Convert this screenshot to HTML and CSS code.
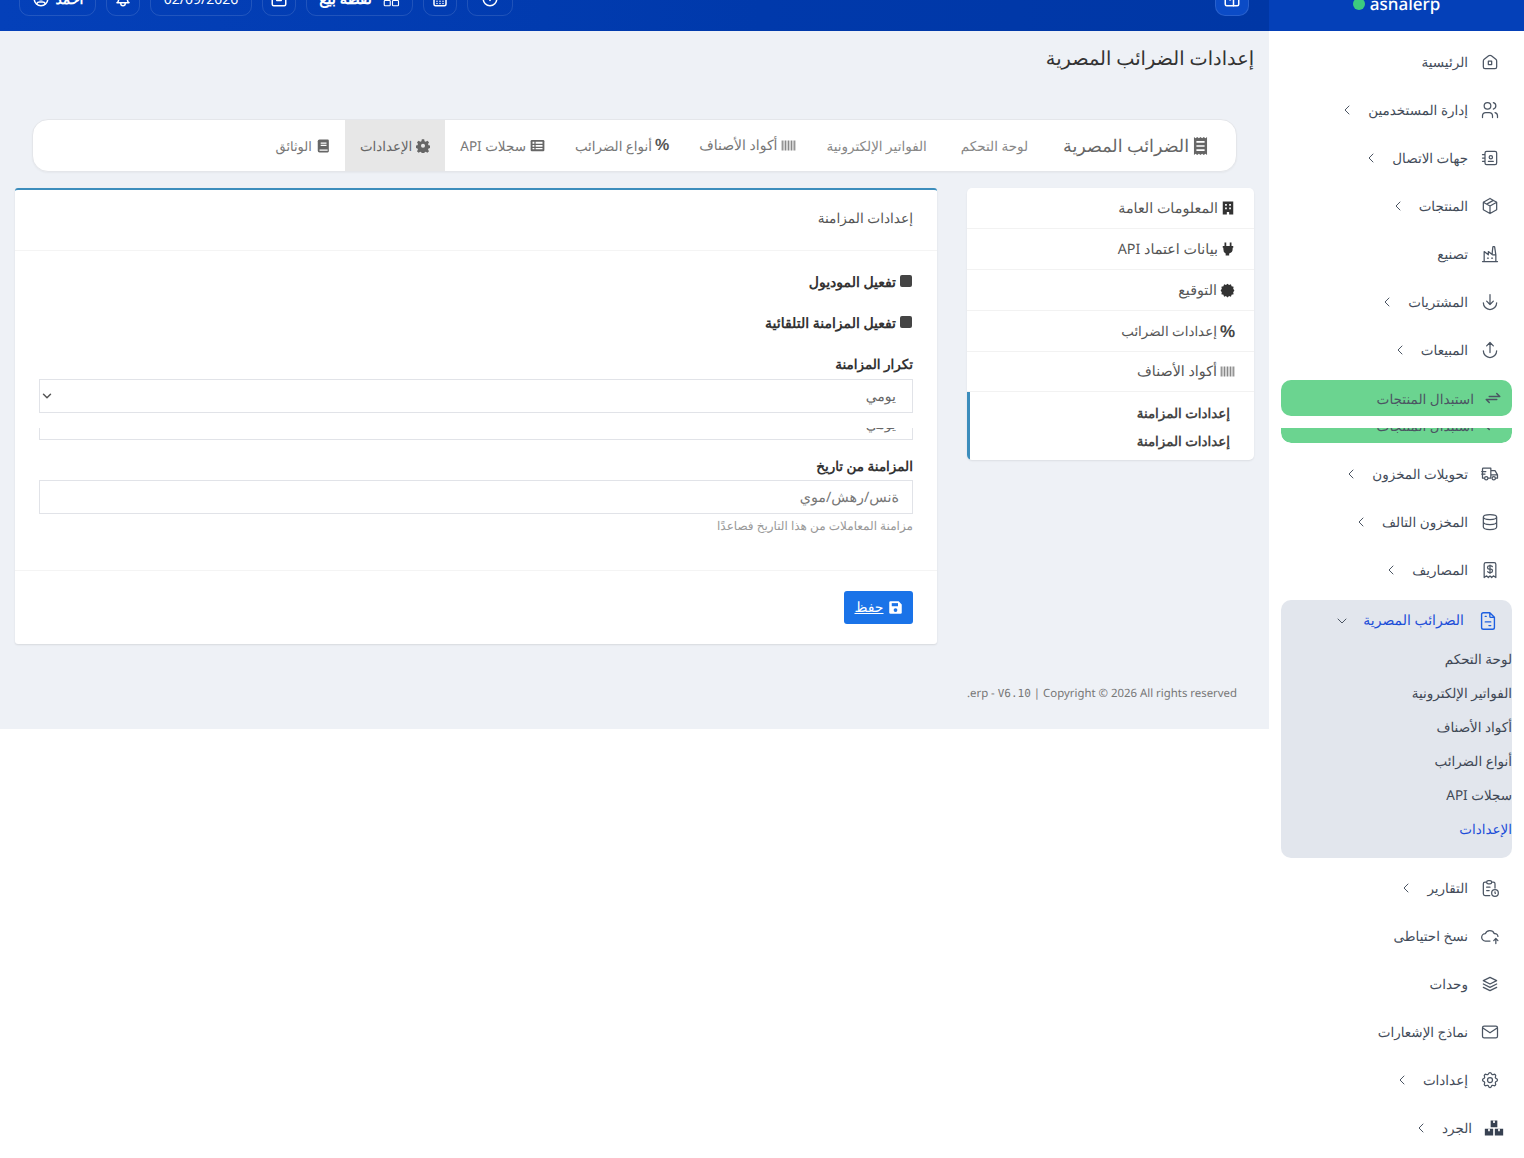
FILE: index.html
```html
<!DOCTYPE html>
<html lang="ar" dir="rtl">
<head>
<meta charset="utf-8">
<title>إعدادات الضرائب المصرية</title>
<link rel="stylesheet" href="styles.css">
</head>
<body>
<svg class="sprite" xmlns="http://www.w3.org/2000/svg">
<defs>
<symbol id="i-home" viewBox="0 0 24 24"><path d="M19 8.71l-5.333-4.148a2.666 2.666 0 0 0-3.274 0L5.059 8.71A2.665 2.665 0 0 0 4 10.815v7.2a2 2 0 0 0 2 2h12a2 2 0 0 0 2-2v-7.2c0-.823-.38-1.6-1-2.105"/><rect x="10" y="11" width="4" height="4"/></symbol>
<symbol id="i-users" viewBox="0 0 24 24"><path d="M5 7a4 4 0 1 0 8 0a4 4 0 1 0-8 0M3 21v-2a4 4 0 0 1 4-4h4a4 4 0 0 1 4 4v2M16 3.13a4 4 0 0 1 0 7.75M21 21v-2a4 4 0 0 0-3-3.85"/></symbol>
<symbol id="i-book" viewBox="0 0 24 24"><path d="M20 6v12a2 2 0 0 1-2 2H8a2 2 0 0 1-2-2V6a2 2 0 0 1 2-2h10a2 2 0 0 1 2 2zM10 16h6M11 11a2 2 0 1 0 4 0a2 2 0 1 0-4 0M3 8h3M3 12h3M3 16h3"/></symbol>
<symbol id="i-box" viewBox="0 0 24 24"><path d="M12 3l8 4.500v9L12 21l-8-4.500v-9L12 3M12 12l8-4.500M12 12v9M12 12L4 7.500M16 5.250l-8 4.500"/></symbol>
<symbol id="i-factory" viewBox="0 0 24 24"><path d="M3 21h18M5 21V9l5 4V9l5 4h4M19 21v-8l-1.436-9.574a.5.5 0 0 0-.495-.426h-1.145a.5.5 0 0 0-.494.418L14.500 12M9 17h1M14 17h1"/></symbol>
<symbol id="i-down" viewBox="0 0 24 24"><path d="M12 3v12M8 11l4 4l4-4M4 13a8 8 0 0 0 16 0"/></symbol>
<symbol id="i-up" viewBox="0 0 24 24"><path d="M12 15V3M8 7l4-4l4 4M4 13a8 8 0 0 0 16 0"/></symbol>
<symbol id="i-swap" viewBox="0 0 24 24"><path stroke-width="2" d="M7 10h14l-4-4M17 14H3l4 4"/></symbol>
<symbol id="i-truck" viewBox="0 0 24 24"><path d="M5 17H3V6a1 1 0 0 1 1-1h9v12H10M13 8h5l3 5v4h-2M13 13h8M2 9h5M2 12h4"/><circle cx="7.500" cy="17" r="2"/><circle cx="16.500" cy="17" r="2"/></symbol>
<symbol id="i-db" viewBox="0 0 24 24"><path d="M4 6a8 3 0 1 0 16 0a8 3 0 1 0-16 0M4 6v6a8 3 0 0 0 16 0V6M4 12v6a8 3 0 0 0 16 0v-6"/></symbol>
<symbol id="i-receipt" viewBox="0 0 24 24"><path d="M5 21V5a2 2 0 0 1 2-2h10a2 2 0 0 1 2 2v16l-3-2l-2 2l-2-2l-2 2l-2-2l-3 2M14.800 8a2 2 0 0 0-1.800-1h-2a2 2 0 0 0 0 4h2a2 2 0 0 1 0 4h-2a2 2 0 0 1-1.800-1M12 6v10"/></symbol>
<symbol id="i-invoice" viewBox="0 0 24 24"><path d="M14 3v4a1 1 0 0 0 1 1h4M17 21H7a2 2 0 0 1-2-2V5a2 2 0 0 1 2-2h7l5 5v11a2 2 0 0 1-2 2zM9 7h1M9 13h6M13 17h2"/></symbol>
<symbol id="i-report" viewBox="0 0 24 24"><path d="M8 5H6a2 2 0 0 0-2 2v12a2 2 0 0 0 2 2h5.700M18 12V7a2 2 0 0 0-2-2h-2M8 5a2 2 0 0 1 2-2h2a2 2 0 0 1 2 2a2 2 0 0 1-2 2h-2a2 2 0 0 1-2-2zM8 11h4M8 15h3M14 18a4 4 0 1 0 8 0a4 4 0 1 0-8 0M18 16.500V18l.5.5"/></symbol>
<symbol id="i-cloud" viewBox="0 0 24 24"><path d="M12 18H6.500A4.500 4.400 0 0 1 6.500 9.200A5.500 5 0 0 1 17 9h1a3.500 3.500 0 0 1 3.500 3.500M19 21v-6M16.500 17.500L19 15l2.500 2.500"/></symbol>
<symbol id="i-stack" viewBox="0 0 24 24"><path d="M12 4L4 8l8 4l8-4l-8-4M4 12l8 4l8-4M4 16l8 4l8-4"/></symbol>
<symbol id="i-mail" viewBox="0 0 24 24"><path d="M3 7a2 2 0 0 1 2-2h14a2 2 0 0 1 2 2v10a2 2 0 0 1-2 2H5a2 2 0 0 1-2-2V7zM3 7l9 6l9-6"/></symbol>
<symbol id="i-gear" viewBox="0 0 24 24"><path d="M10.325 4.317c.426-1.756 2.924-1.756 3.350 0a1.724 1.724 0 0 0 2.573 1.066c1.543-.94 3.310.826 2.370 2.370a1.724 1.724 0 0 0 1.065 2.572c1.756.426 1.756 2.924 0 3.350a1.724 1.724 0 0 0-1.066 2.573c.94 1.543-.826 3.310-2.370 2.370a1.724 1.724 0 0 0-2.572 1.065c-.426 1.756-2.924 1.756-3.350 0a1.724 1.724 0 0 0-2.573-1.066c-1.543.94-3.310-.826-2.370-2.370a1.724 1.724 0 0 0-1.065-2.572c-1.756-.426-1.756-2.924 0-3.350a1.724 1.724 0 0 0 1.066-2.573c-.94-1.543.826-3.310 2.370-2.370c1 .608 2.296.07 2.572-1.065zM9 12a3 3 0 1 0 6 0a3 3 0 0 0-6 0"/></symbol>
<symbol id="i-chev-l" viewBox="0 0 24 24"><path d="M15 6l-6 6l6 6"/></symbol>
<symbol id="i-chev-d" viewBox="0 0 24 24"><path d="M6 9l6 6l6-6"/></symbol>
<symbol id="s-boxes" viewBox="0 0 24 24"><path class="fill" d="M8 3h8v8H8zM1 13h10v8H1zM13 13h10v8H13z"/><path class="cut" d="M11 3h2v3h-2zM5 13h2v3H5zM17 13h2v3h-2z"/></symbol>
<symbol id="s-receipt" viewBox="4 1 16 22"><path class="fill" d="M4 1l2 1.500L8 1l2 1.500L12 1l2 1.500L16 1l2 1.500L20 1v22l-2-1.500L16 23l-2-1.500L12 23l-2-1.500L8 23l-2-1.500L4 23z"/><path class="cut" d="M7 6h10v2H7zM7 11h10v2H7zM7 16h10v2H7z"/></symbol>
<symbol id="s-barcode" viewBox="0 0 24 24"><path class="fill" d="M1 4h2v16H1zM4 4h1v16H4zM6 4h2v16H6zM9 4h1v16H9zM11 4h2v16h-2zM14 4h1v16h-1zM16 4h2v16h-2zM19 4h1v16h-1zM21 4h2v16h-2z"/></symbol>
<symbol id="s-list" viewBox="0 0 24 24"><path class="fill" d="M1 5a2 2 0 0 1 2-2h18a2 2 0 0 1 2 2v14a2 2 0 0 1-2 2H3a2 2 0 0 1-2-2z"/><path class="cut" d="M4 6h3v3H4zM9 6h11v3H9zM4 11h3v3H4zM9 11h11v3H9zM4 16h3v2H4zM9 16h11v2H9z"/></symbol>
<symbol id="s-cog" viewBox="0 0 24 24"><path class="fill" fill-rule="evenodd" d="M10 1h4l.7 3.200 2 .9L19.500 3.400l2.800 2.800-1.700 2.800.9 2 3 .9v4l-3 .7-.9 2 1.700 2.800-2.800 2.800-2.800-1.700-2 .9-.7 3h-4l-.7-3-2-.9-2.800 1.700-2.800-2.800 1.700-2.800-.9-2-3-.7v-4l3-.9.9-2L1.700 6.200 4.500 3.400l2.800 1.700 2-.9zM12 8.500a3.500 3.500 0 1 0 0 7a3.500 3.500 0 0 0 0-7z" transform="translate(0 -.5)"/></symbol>
<symbol id="s-book" viewBox="0 0 24 24"><path class="fill" d="M6 1h14a2 2 0 0 1 2 2v18a2 2 0 0 1-2 2H6a3 3 0 0 1-3-3V4a3 3 0 0 1 3-3z"/><path class="cut" d="M8 6h10v2H8zM8 10h10v2H8zM6 18h14v2H6z"/></symbol>
<symbol id="s-building" viewBox="0 0 24 24"><path class="fill" d="M3 1h18v22h-7v-4h-4v4H3z"/><path class="cut" d="M7 5h3v3H7zM14 5h3v3h-3zM7 11h3v3H7zM14 11h3v3h-3z"/></symbol>
<symbol id="s-plug" viewBox="0 0 24 24"><path class="fill" d="M6 1h3v6h6V1h3v6h3v3h-1v2a8 8 0 0 1-6 7.700V23h-6v-3.300A8 8 0 0 1 4 12v-2H3V7h3z"/></symbol>
<symbol id="s-cert" viewBox="0 0 24 24"><path class="fill" d="M12 1l2.500 2.200L17.500 2l1 3.200 3.300.7-.7 3.300L23 12l-1.900 2.800.7 3.300-3.300.7-1 3.200-3-1.200L12 23l-2.500-2.200-3 1.200-1-3.200-3.300-.7.7-3.300L1 12l1.900-2.800-.7-3.300 3.300-.7 1-3.200 3 1.200z"/></symbol>
<symbol id="s-save" viewBox="0 0 24 24"><path class="fill" d="M4 2h13l5 5v13a2 2 0 0 1-2 2H4a2 2 0 0 1-2-2V4a2 2 0 0 1 2-2z"/><path class="cut" d="M6 5h10v5H6z"/><circle class="cut" cx="12" cy="16" r="3"/></symbol>
<symbol id="h-user" viewBox="0 0 24 24"><circle cx="12" cy="12" r="9"/><circle cx="12" cy="10" r="3"/><path d="M6.200 18.500a4 4 0 0 1 3.800-2.500h4a4 4 0 0 1 3.800 2.500"/></symbol>
<symbol id="h-bell" viewBox="0 0 24 24"><path d="M10 5a2 2 0 1 1 4 0a7 7 0 0 1 4 6v3a4 4 0 0 0 2 3H4a4 4 0 0 0 2-3v-3a7 7 0 0 1 4-6M9 17v1a3 3 0 0 0 6 0v-1"/></symbol>
<symbol id="h-square" viewBox="0 0 24 24"><path d="M5 4h14a2 2 0 0 1 2 2v13a2 2 0 0 1-2 2H5a2 2 0 0 1-2-2V6a2 2 0 0 1 2-2zM9 14h6"/></symbol>
<symbol id="h-apps" viewBox="0 0 24 24"><rect x="3" y="14" width="8" height="7" rx="1"/><rect x="14" y="14" width="8" height="7" rx="1"/><rect x="3" y="3" width="8" height="7" rx="1"/><rect x="14" y="3" width="8" height="7" rx="1"/></symbol>
<symbol id="h-calc" viewBox="0 0 24 24"><rect x="4" y="3" width="16" height="18" rx="2"/><path d="M8 12h.01M12 12h.01M16 12h.01M8 15h.01M12 15h.01M16 15h.01M8 18h.01M12 18h.01M16 18h.01"/></symbol>
<symbol id="h-clock" viewBox="0 0 24 24"><circle cx="12" cy="12" r="9"/><path d="M12 8v6"/></symbol>
<symbol id="h-panel" viewBox="0 0 24 24"><rect x="3" y="4" width="18" height="17" rx="2"/><path d="M14 4v17M9 13h1"/></symbol>
</defs>
</svg>

<aside class="sidebar">
  <div class="brand"><span class="brand-text"><i class="dot"></i>asnalerp</span></div>
  <nav class="nav">
    <a class="item"><svg class="ic"><use href="#i-home"/></svg><span>الرئيسية</span></a>
    <a class="item"><svg class="ic"><use href="#i-users"/></svg><span>إدارة المستخدمين</span><svg class="chev"><use href="#i-chev-l"/></svg></a>
    <a class="item"><svg class="ic"><use href="#i-book"/></svg><span>جهات الاتصال</span><svg class="chev"><use href="#i-chev-l"/></svg></a>
    <a class="item"><svg class="ic"><use href="#i-box"/></svg><span>المنتجات</span><svg class="chev"><use href="#i-chev-l"/></svg></a>
    <a class="item"><svg class="ic"><use href="#i-factory"/></svg><span>تصنيع</span></a>
    <a class="item"><svg class="ic"><use href="#i-down"/></svg><span>المشتريات</span><svg class="chev"><use href="#i-chev-l"/></svg></a>
    <a class="item"><svg class="ic"><use href="#i-up"/></svg><span>المبيعات</span><svg class="chev"><use href="#i-chev-l"/></svg></a>
    <a class="green green-first"><svg class="ic"><use href="#i-swap"/></svg><span>استبدال المنتجات</span></a>
    <div class="green-clip"><a class="green"><svg class="ic"><use href="#i-swap"/></svg><span>استبدال المنتجات</span></a></div>
    <a class="item"><svg class="ic"><use href="#i-truck"/></svg><span>تحويلات المخزون</span><svg class="chev"><use href="#i-chev-l"/></svg></a>
    <a class="item"><svg class="ic"><use href="#i-db"/></svg><span>المخزون التالف</span><svg class="chev"><use href="#i-chev-l"/></svg></a>
    <a class="item"><svg class="ic"><use href="#i-receipt"/></svg><span>المصاريف</span><svg class="chev"><use href="#i-chev-l"/></svg></a>
    <div class="group">
      <a class="group-head"><svg class="ic-lg"><use href="#i-invoice"/></svg><span>الضرائب المصرية</span><svg class="chev"><use href="#i-chev-d"/></svg></a>
      <a class="sub">لوحة التحكم</a>
      <a class="sub">الفواتير الإلكترونية</a>
      <a class="sub">أكواد الأصناف</a>
      <a class="sub">أنواع الضرائب</a>
      <a class="sub">سجلات API</a>
      <a class="sub sub-on">الإعدادات</a>
    </div>
    <a class="item"><svg class="ic"><use href="#i-report"/></svg><span>التقارير</span><svg class="chev"><use href="#i-chev-l"/></svg></a>
    <a class="item"><svg class="ic"><use href="#i-cloud"/></svg><span>نسخ احتياطى</span></a>
    <a class="item"><svg class="ic"><use href="#i-stack"/></svg><span>وحدات</span></a>
    <a class="item"><svg class="ic"><use href="#i-mail"/></svg><span>نماذج الإشعارات</span></a>
    <a class="item"><svg class="ic"><use href="#i-gear"/></svg><span>إعدادات</span><svg class="chev"><use href="#i-chev-l"/></svg></a>
    <a class="item item-boxes"><svg class="ic solid"><use href="#s-boxes"/></svg><span>الجرد</span><svg class="chev"><use href="#i-chev-l"/></svg></a>
  </nav>
</aside>

<div class="page">
  <header class="topbar">
    <span class="pill pill-icon"><svg class="hic"><use href="#h-panel"/></svg></span>
    <span class="topbar-left">
      <span class="pill pill-w46"><svg class="hic"><use href="#h-clock"/></svg></span>
      <span class="pill pill-icon"><svg class="hic"><use href="#h-calc"/></svg></span>
      <span class="pill pill-pos"><svg class="hic hic-thin"><use href="#h-apps"/></svg><b>نقطة بيع</b></span>
      <span class="pill pill-icon"><svg class="hic"><use href="#h-square"/></svg></span>
      <span class="pill pill-date">02/09/2026</span>
      <span class="pill pill-icon"><svg class="hic"><use href="#h-bell"/></svg></span>
      <span class="pill pill-user"><b>أحمد</b><svg class="hic"><use href="#h-user"/></svg></span>
    </span>
  </header>

  <main class="content">
    <h1 class="title">إعدادات الضرائب المصرية</h1>

    <div class="tabs">
      <a class="tab tab-brand"><svg class="sic sic-brand"><use href="#s-receipt"/></svg>الضرائب المصرية</a>
      <a class="tab tab-small tab-gap">لوحة التحكم</a>
      <a class="tab tab-small">الفواتير الإلكترونية</a>
      <a class="tab tab-code"><svg class="sic sic-wide sic-bar"><use href="#s-barcode"/></svg>أكواد الأصناف</a>
      <a class="tab tab-tax"><b class="pct">%</b>أنواع الضرائب</a>
      <a class="tab"><svg class="sic sic-wide"><use href="#s-list"/></svg>سجلات API</a>
      <a class="tab tab-on"><svg class="sic"><use href="#s-cog"/></svg>الإعدادات</a>
      <a class="tab tab-docs"><svg class="sic"><use href="#s-book"/></svg>الوثائق</a>
    </div>

    <div class="cols">
      <div class="side-tabs">
        <a class="st"><svg class="sic dark"><use href="#s-building"/></svg>المعلومات العامة</a>
        <a class="st"><svg class="sic dark"><use href="#s-plug"/></svg>بيانات اعتماد API</a>
        <a class="st"><svg class="sic sic-wide dark"><use href="#s-cert"/></svg>التوقيع</a>
        <a class="st st-tax"><b class="pct pct-lg">%</b>إعدادات الضرائب</a>
        <a class="st"><svg class="sic sic-wide sic-bar"><use href="#s-barcode"/></svg>أكواد الأصناف</a>
        <div class="st-active"><span>إعدادات المزامنة</span><span>إعدادات المزامنة</span></div>
      </div>

      <section class="card">
        <h2 class="card-title">إعدادات المزامنة</h2>
        <div class="card-body">
          <label class="check"><i class="box"></i>تفعيل الموديول</label>
          <label class="check"><i class="box"></i>تفعيل المزامنة التلقائية</label>
          <div class="flabel">تكرار المزامنة</div>
          <div class="control control-select"><span>يومي</span><svg class="sel-chev"><use href="#i-chev-d"/></svg></div>
          <div class="control-clip"><span>يومي</span></div>
          <div class="flabel flabel-date">المزامنة من تاريخ</div>
          <div class="control control-date"><span>ةنس/رهش/موي</span></div>
          <div class="help">مزامنة المعاملات من هذا التاريخ فصاعدًا</div>
        </div>
        <div class="card-foot">
          <a class="btn"><svg class="sic sic-wide white"><use href="#s-save"/></svg><u>حفظ</u></a>
        </div>
      </section>
    </div>

    <footer class="foot"><span dir="ltr">.erp - <span class="mono">V6.10</span> | Copyright © 2026 All rights reserved</span></footer>
  </main>
</div>
</body>
</html>
```

FILE: styles.css
```css
* { box-sizing: border-box; }
html, body { margin: 0; padding: 0; height: 1158px; overflow: hidden; background: #fff; }
body { display: flex; align-items: flex-start; font-family: "Noto Sans", sans-serif; font-size: 14px; color: #444; text-rendering: geometricPrecision; }
.sprite { position: absolute; width: 0; height: 0; }
a { color: inherit; text-decoration: none; }
svg { display: block; flex: none; fill: none; stroke: currentColor; stroke-width: 1.5; stroke-linecap: round; stroke-linejoin: round; }

.sidebar { width: 255px; flex: none; background: #fff; height: 1158px; }
.brand { height: 31px; background: #0440b8; display: flex; align-items: flex-end; justify-content: center; overflow: hidden; }
.brand-text { direction: ltr; display: flex; align-items: center; gap: 5px; color: #fff; font: 500 17px/20px "Noto Sans", sans-serif; margin-bottom: 17px; }
.dot { width: 12px; height: 12px; border-radius: 50%; background: #3ccb7f; }
.nav { display: flex; flex-direction: column; padding: 7px 12px 0 12px; }
.item { height: 48px; display: flex; align-items: center; padding-right: 12px; color: #434c5a; font-size: 13.500px; flex: none; }
.item span { margin-bottom: 1px; }
.ic { width: 20px; height: 20px; margin-left: 12px; color: #4b5563; }
.item-boxes { padding-right: 8px; }
.chev { width: 16px; height: 16px; margin-right: 13px; color: #4b5563; }
.solid { stroke: none; fill: currentColor; color: #374151; }
.green { height: 36px; border-radius: 10px; background: #6bd490; display: flex; align-items: center; padding-right: 10px; color: #4b5563; font-size: 13.600px; flex: none; }
.green-first { margin-top: 6px; }
.green .ic { margin-left: 10px; width: 18px; height: 18px; }
.green-clip { height: 15px; margin-top: 12px; margin-bottom: 7px; overflow: hidden; display: flex; flex-direction: column; justify-content: flex-end; border-radius: 0 0 10px 10px; flex: none; }
.group { background: #e2e6ed; border-radius: 10px; height: 258px; margin-top: 6px; margin-bottom: 6px; flex: none; }
.group-head { height: 42px; display: flex; align-items: center; padding-right: 13px; color: #1d4ed8; font-size: 14px; font-weight: 500; }
.group-head span { margin-bottom: 2px; }
.ic-lg { width: 22px; height: 22px; margin-left: 13px; color: #1d5fe0; }
.sub { display: block; height: 34px; line-height: 34px; font-size: 13.500px; color: #3f4855; }
.sub-on { color: #1d4ed8; }

.page { flex: none; width: 1269px; display: flex; flex-direction: column; background: #eef1f6; }
.topbar { height: 31px; flex: none; overflow: hidden; display: flex; align-items: flex-end; justify-content: space-between; padding: 0 20px 15px 19px; background: linear-gradient(90deg, #0440b9 0%, #0039ab 60%, #0037a5 100%); }
.topbar-left { display: flex; gap: 10px; align-items: flex-end; }
.pill { height: 34px; flex: none; display: flex; align-items: center; justify-content: center; gap: 6px; border: 1px solid rgba(255, 255, 255, .12); border-radius: 10px; color: #fff; font-size: 14px; }
.pill b { font-weight: 700; }
.pill-icon { width: 34px; }
.pill-w46 { width: 46px; }
.pill-pos { width: 107px; gap: 10px; font-size: 15px; }
.pill-date { width: 102px; }
.pill-user { width: 77px; }
.hic { width: 18px; height: 18px; color: #fff; stroke-width: 2; }
.hic-thin { stroke-width: 1.500; }
.topbar > .pill-icon { background: #0b4bc6; }

.content { height: 698px; padding: 0 15px; flex: none; display: flex; flex-direction: column; }
.title { margin: 13px 0 0; font-size: 19.300px; font-weight: 400; line-height: 27px; height: 27px; color: #333; }
.tabs { height: 53px; margin: 48px 17px 0; display: flex; align-items: stretch; background: #fff; border: 1px solid #e4e6ea; border-radius: 16px; overflow: hidden; padding-right: 13px; box-shadow: 0 1px 2px rgba(0,0,0,.04); flex: none; }
.tab { display: flex; align-items: center; gap: 4px; padding: 0 15px; font-size: 13.500px; color: #777; flex: none; }
.tab-brand { font-size: 17.500px; margin-left: 5px; color: #666; }
.tab-small { font-size: 13.500px; color: #888; }
.tab-gap { margin-left: 4px; }
.tab-code { font-size: 14px; }
.tab-tax { font-size: 13.400px; gap: 3px; }
.tab-docs { font-size: 13px; }
.tab-on { background: #e7e7e7; color: #666; font-size: 13.400px; --cut: #e7e7e7; }
.sic { width: 14px; height: 14px; stroke: none; fill: currentColor; color: #666; }
.sic-wide { width: 15px; height: 15px; }
.sic-brand { width: 15px; height: 18px; }
.sic-bar { color: #888; }
.fill { fill: currentColor; stroke: none; }
.cut { fill: var(--cut, #fff); stroke: none; }
.pct { font: 700 16px/1 "Liberation Sans", sans-serif; color: #555; }
.pct-lg { font-size: 17px; color: #444; }
.dark { color: #333; }
.white { color: #fff; --cut: #1a73e8; }

.cols { display: grid; grid-template-columns: 287px 922px; gap: 30px; margin-top: 16px; align-items: start; flex: none; }
.side-tabs { background: #fff; border-radius: 5px; height: 272px; box-shadow: 0 1px 2px rgba(0,0,0,.08); overflow: hidden; display: flex; flex-direction: column; }
.st { height: 41px; flex: none; display: flex; align-items: center; gap: 3px; padding: 0 19px; border-bottom: 1px solid #f2f2f2; color: #555; font-size: 14.300px; }
.st:nth-child(5) { height: 40px; }
.st-tax { font-size: 13.400px; }
.st-active { flex: 1; border-left: 3px solid #3c8dbc; padding: 7px 24px 0 0; display: flex; flex-direction: column; font-weight: 600; color: #444; font-size: 13.400px; line-height: 28px; }

.card { height: 456px; background: #fff; border-top: 2px solid #3c8dbc; border-radius: 3px; box-shadow: 0 1px 2px rgba(0,0,0,.1); display: flex; flex-direction: column; }
.card-title { height: 61px; flex: none; margin: 0; padding: 0 24px; font-size: 13.700px; font-weight: 400; line-height: 58px; color: #555; border-bottom: 1px solid #f4f4f4; }
.card-body { height: 320px; flex: none; padding: 0 24px; border-bottom: 1px solid #f4f4f4; display: flex; flex-direction: column; }
.check { display: flex; align-items: center; gap: 4px; height: 20px; margin-top: 21px; font-weight: 700; font-size: 14px; color: #333; }
.check + .check { margin-top: 21px; }
.box { width: 12px; height: 12px; border-radius: 2px; background: #444; margin: -3px 1px 0 0; }
.flabel { margin-top: 21px; height: 20px; line-height: 20px; font-weight: 700; font-size: 13.500px; color: #333; }
.flabel-date { margin-top: 16px; }
.control { height: 34px; margin-top: 5px; border: 1px solid #e1e3e8; display: flex; align-items: center; justify-content: space-between; padding: 0 16px; font-size: 14px; color: #666; flex: none; }
.control-select { padding-left: 0; }
.sel-chev { width: 14px; height: 14px; stroke-width: 2.500; margin-right: auto; color: #555; }
.control-clip { height: 12px; margin-top: 15px; border: 1px solid #e1e3e8; border-top: 0; overflow: hidden; display: flex; align-items: flex-end; padding: 0 16px; font-size: 14px; color: #666; flex: none; }
.control-clip span { margin-bottom: 5px; }
.control-date { margin-top: 4px; padding: 0 13px; font-size: 14.300px; color: #777; }
.help { margin-top: 4px; font-size: 12px; line-height: 16px; color: #999; }
.card-foot { padding: 20px 24px; }
.btn { width: 69px; height: 33px; background: #1a73e8; color: #fff; border-radius: 3px; display: flex; align-items: center; justify-content: center; gap: 4px; font-size: 14px; }
.foot { margin-top: 42px; padding-right: 17px; font: 11.400px/16px "Noto Sans", sans-serif; color: #777; }
.mono { font-family: "DejaVu Sans Mono", monospace; font-size: 11px; }
```
